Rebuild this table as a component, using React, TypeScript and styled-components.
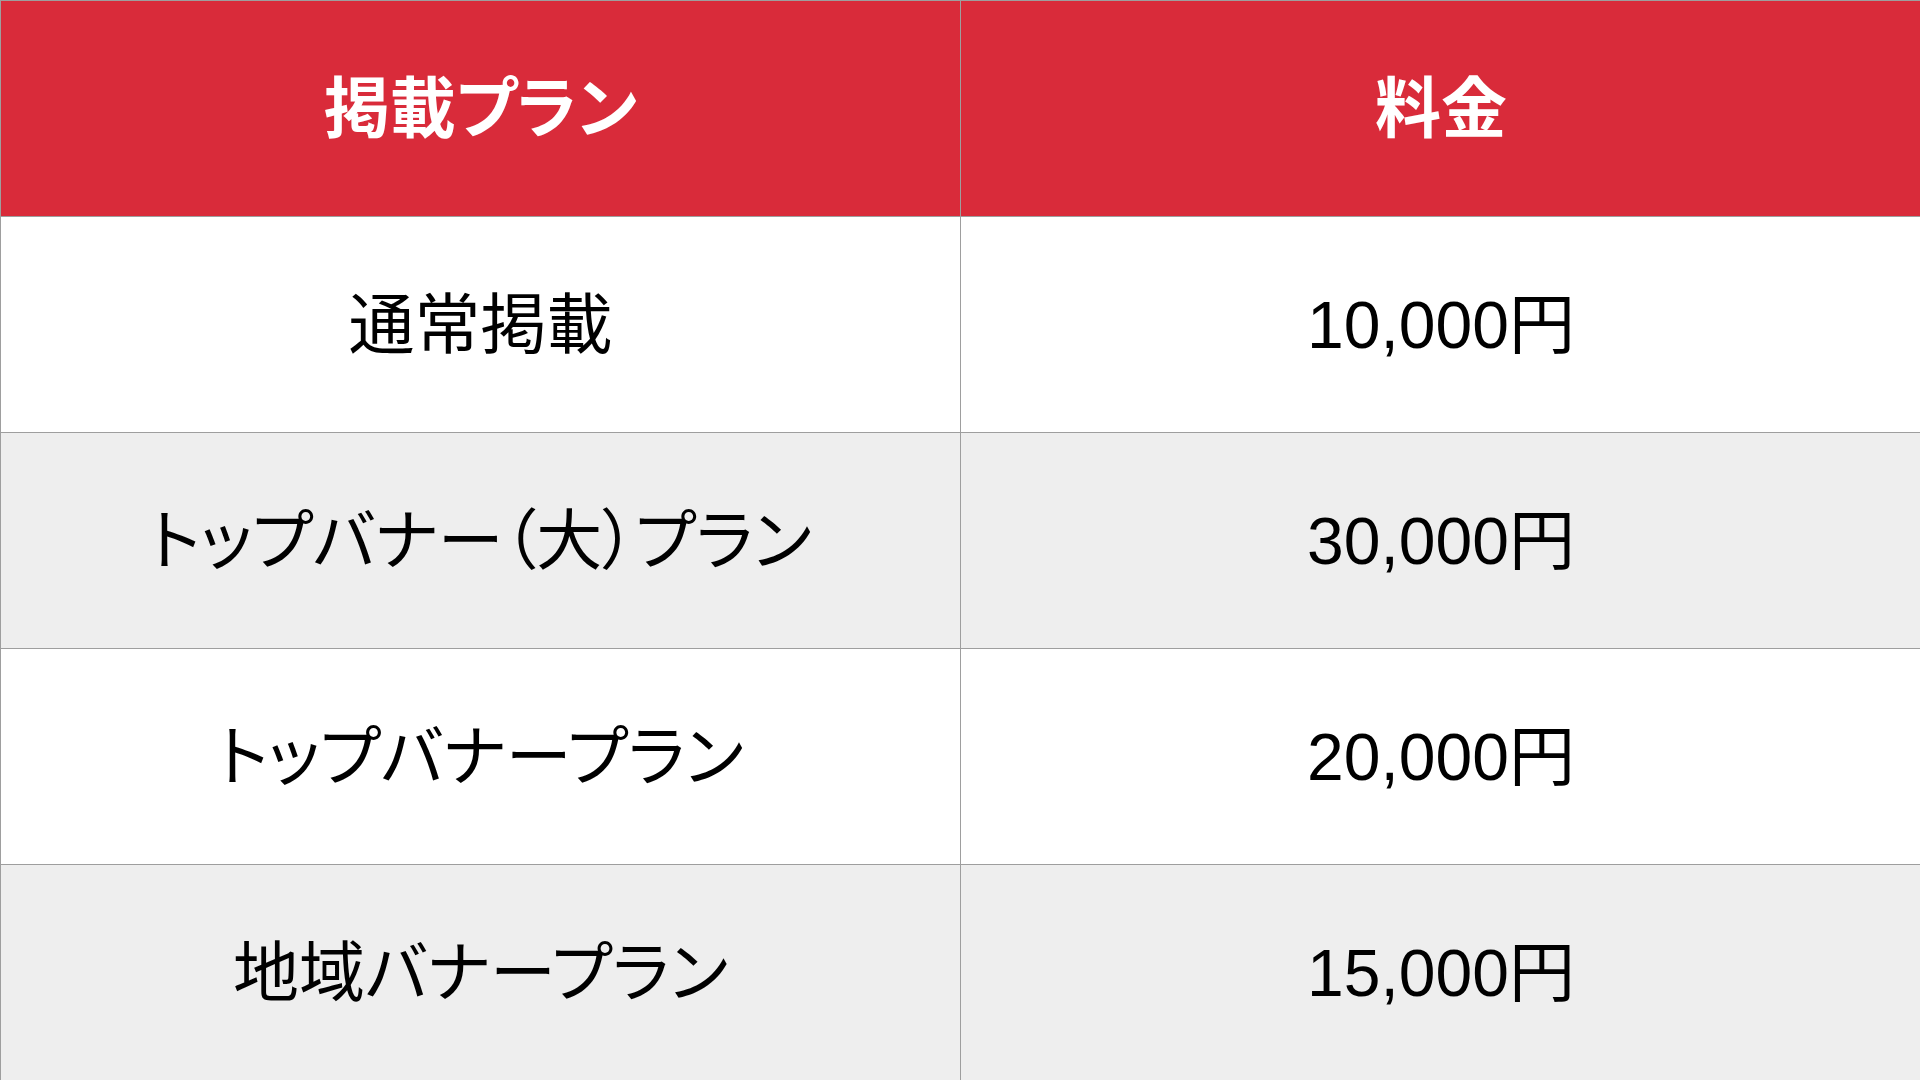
import React from "react";
import styled, { createGlobalStyle } from "styled-components";

const GlobalStyle = createGlobalStyle`
  html, body {
    margin: 0;
    padding: 0;
    background: #ffffff;
    overflow: hidden;
  }
  body {
    font-family: "Liberation Sans", "Noto Sans CJK JP", sans-serif;
  }
`;

const Table = styled.div`
  display: grid;
  grid-template-columns: 960px 961px;
  grid-auto-rows: 216px;
  width: 1921px;
  height: 1080px;
  overflow: hidden;
`;

const Cell = styled.div<{ $head?: boolean; $alt?: boolean }>`
  display: flex;
  align-items: center;
  justify-content: center;
  box-sizing: border-box;
  padding-bottom: 12px;
  border-left: 1px solid #9e9e9e;
  border-top: 1px solid #9e9e9e;
  background: ${(p) => (p.$head ? "#d92b3a" : p.$alt ? "#eeeeee" : "#ffffff")};
  color: ${(p) => (p.$head ? "#ffffff" : "#000000")};
  font-size: 66px;
  font-weight: ${(p) => (p.$head ? 700 : 400)};
  font-feature-settings: "palt";
  white-space: nowrap;
`;

const rows = [
  { plan: "通常掲載", price: "10,000円" },
  { plan: "トップバナー（大）プラン", price: "30,000円" },
  { plan: "トップバナープラン", price: "20,000円" },
  { plan: "地域バナープラン", price: "15,000円" },
];

const App = () => {
  return (
    <>
      <GlobalStyle />
      <Table>
        <Cell $head>掲載プラン</Cell>
        <Cell $head>料金</Cell>
        {rows.map((r, i) => (
          <React.Fragment key={r.plan}>
            <Cell $alt={i % 2 === 1}>{r.plan}</Cell>
            <Cell $alt={i % 2 === 1}>{r.price}</Cell>
          </React.Fragment>
        ))}
      </Table>
    </>
  );
};

export default App;
